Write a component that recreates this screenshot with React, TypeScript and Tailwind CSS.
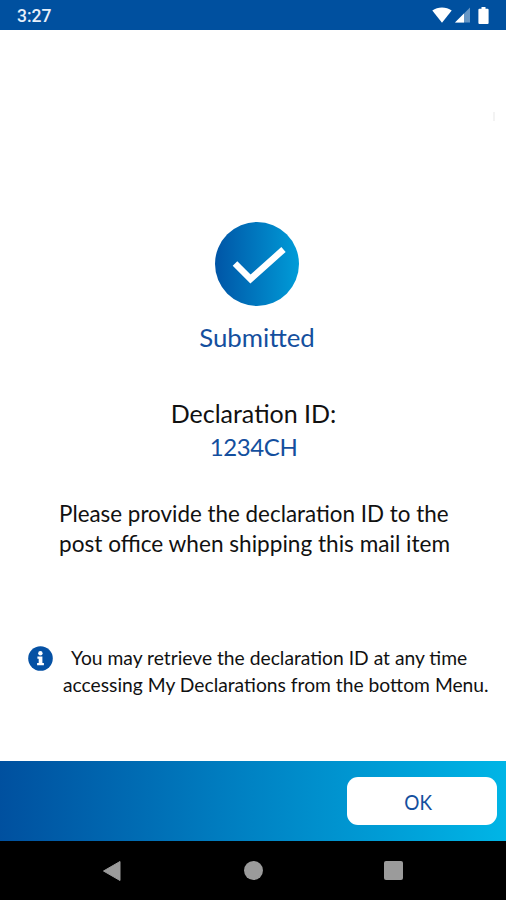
import type { ReactNode } from "react";

function StatusBar() {
  return (
    <header className="flex h-[30px] shrink-0 items-center justify-between bg-[#00509f] pr-[17px] pl-[17px]">
      <span className="pt-[2px] font-['Roboto',sans-serif] text-[17.5px] leading-[28px] font-medium text-[#e6effa]">
        3:27
      </span>
      <div className="flex items-center text-white">
        <svg width="20" height="16" viewBox="0 0 20 16" fill="currentColor">
          <path d="M0.3 3.6C5.8-0.5 14.2-0.5 19.7 3.6L10 15.8z" />
        </svg>
        <svg className="ml-[3px]" width="15" height="16" viewBox="0 0 15 16" fill="currentColor">
          <path d="M15 0.5V15.5H0z" opacity="0.4" />
          <path d="M9 6.5V15.5H0z" />
        </svg>
        <svg className="ml-[8px]" width="11" height="17" viewBox="0 0 11 17" fill="currentColor">
          <path d="M3.5 0h4v1.8H9.6a1 1 0 0 1 1 1V16a1 1 0 0 1-1 1H1.4a1 1 0 0 1-1-1V2.8a1 1 0 0 1 1-1H3.5z" />
        </svg>
      </div>
    </header>
  );
}

function SuccessBadge() {
  return (
    <div className="flex size-[84px] items-center justify-center rounded-full bg-linear-to-r from-[#0055a6] to-[#009cd8]">
      <svg width="84" height="84" viewBox="0 0 84 84" fill="none">
        <path d="M20 41.5L35.5 57L68.5 27.5" stroke="#fff" strokeWidth="6.5" />
      </svg>
    </div>
  );
}

function InfoNote({ children }: { children: ReactNode }) {
  return (
    <div className="mt-[85px] flex w-full pl-[28px]">
      <svg className="mt-[2px] shrink-0" width="25" height="25" viewBox="0 0 25 25">
        <circle cx="12.5" cy="12.5" r="12.3" fill="#0551a4" />
        <circle cx="12.4" cy="7.2" r="2.2" fill="#fff" />
        <path d="M9.4 10.6h5v6.4h1.5v2.3H9.1V17h1.6v-4.2H9.4z" fill="#fff" />
      </svg>
      <div className="ml-[10px] whitespace-nowrap">{children}</div>
    </div>
  );
}

export default function App() {
  return (
    <div className="flex h-[900px] w-[506px] flex-col overflow-hidden bg-white font-['Lato',sans-serif] text-[#111]">
      <StatusBar />

      <main className="relative flex flex-1 flex-col items-center pt-[192px]">
        <div className="absolute top-[82px] right-[11px] h-[9px] w-[2px] bg-[#f3f3f3]" />

        <div className="ml-[8px]">
          <SuccessBadge />
        </div>
        <h1 className="mt-[16px] ml-[8px] text-[25.8px] leading-[30px] text-[#144f9e]">
          Submitted
        </h1>

        <div className="mt-[46px] text-center whitespace-nowrap">
          <p className="ml-[1px] text-[25px] leading-[30px]">Declaration ID:</p>
          <p className="mt-[4px] ml-[1px] text-[24px] leading-[30px] tracking-[-0.4px] text-[#144f9e]">
            1234CH
          </p>
        </div>

        <p className="mt-[37px] w-full pl-[59px] text-[22.4px] leading-[30px] whitespace-nowrap">
          <span className="block">Please provide the declaration ID to the</span>
          <span className="block text-[22.6px]">post office when shipping this mail item</span>
        </p>

        <InfoNote>
          <p className="pl-[8px] text-[19.25px] leading-[27px]">
            You may retrieve the declaration ID at any time
          </p>
          <p className="text-[19.25px] leading-[27px]">
            accessing My Declarations from the bottom Menu.
          </p>
        </InfoNote>
      </main>

      <footer className="flex h-[80px] shrink-0 items-center justify-end bg-linear-to-r from-[#00509f] via-[#0083c4] to-[#00b5e6] pr-[9px]">
        <button className="h-[48px] w-[150px] rounded-[11px] bg-white pr-[7px] text-[22px] text-[#144f9e]">
          <span className="inline-block scale-x-[0.86]">OK</span>
        </button>
      </footer>

      <nav className="flex h-[59px] shrink-0 items-center justify-between bg-black pr-[103px] pl-[102px] text-[#9b9b9b]">
        <svg width="20" height="22" viewBox="0 0 20 22" fill="currentColor">
          <path d="M1.5 11L18 1.5V20.5z" stroke="currentColor" strokeLinejoin="round" />
        </svg>
        <div className="size-[19px] rounded-full bg-[#9b9b9b]" />
        <div className="size-[19px] rounded-[2px] bg-[#9b9b9b]" />
      </nav>
    </div>
  );
}
